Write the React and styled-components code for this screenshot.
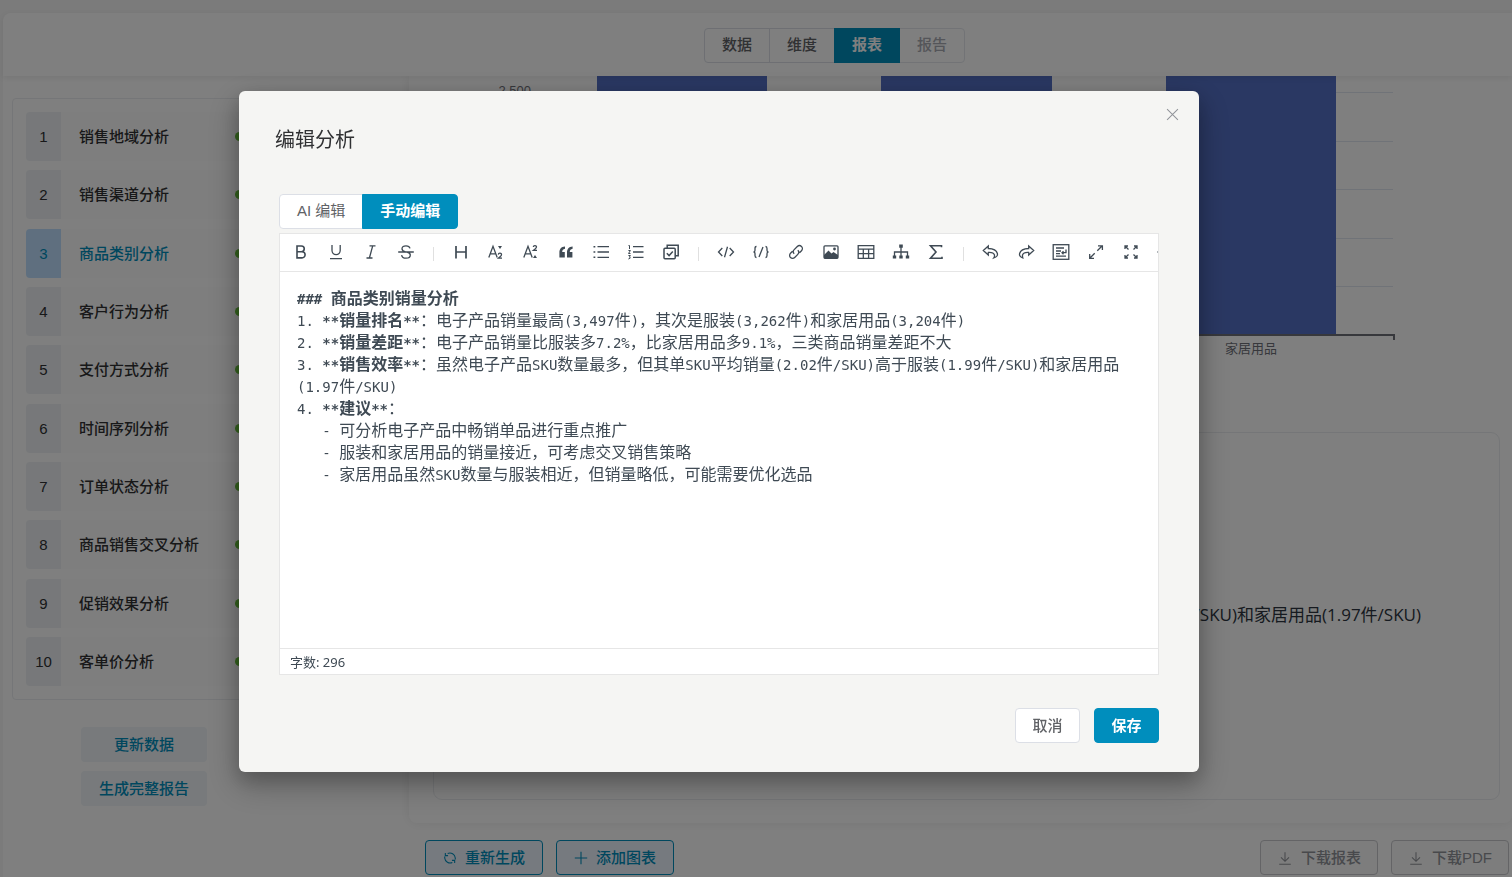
import React, { useState } from "react";
import styled, { createGlobalStyle, css } from "styled-components";

const theme = {
  primary: "#008ebd",
  text: "#303133",
  regular: "#606266",
  disabled: "#a8abb2",
  border: "#dcdfe6",
  ink: "#3f4a54",
};

const GlobalStyle = createGlobalStyle`
  * {
    box-sizing: border-box;
  }

  body {
    margin: 0;
    height: 100vh;
    overflow: hidden;
    background: #f6f6f6;
    color: ${theme.text};
    font-family: "Liberation Sans", "Noto Sans CJK SC", sans-serif;
    font-size: 15px;
  }

  button {
    font-family: inherit;
    font-size: inherit;
    cursor: pointer;
  }
`;

const Page = styled.div`
  display: flex;
  flex-direction: column;
  height: 100vh;
  padding: 13px 0 0 3px;
  overflow: hidden;
`;

const Header = styled.header`
  position: relative;
  display: flex;
  flex-shrink: 0;
  justify-content: center;
  align-items: center;
  height: 63px;
  padding: 2px 0 0 154px;
  background: #fff;
  border-radius: 8px 0 0 0;
  box-shadow: 0 2px 6px rgba(0, 0, 0, 0.08);
`;

const ButtonGroup = styled.div`
  display: flex;
`;

const GroupButton = styled.button`
  height: 35px;
  min-width: 65px;
  padding: 0 17px 2px;
  margin-left: -1px;
  border: 1px solid ${theme.border};
  background: #fff;
  color: ${theme.regular};
  line-height: 20px;

  &:first-child {
    margin-left: 0;
    border-radius: 4px 0 0 4px;
  }

  &:last-child {
    border-radius: 0 4px 4px 0;
  }

  &:disabled {
    color: ${theme.disabled};
    border-color: #e4e7ed;
  }

  ${({ $active }) =>
    $active &&
    css`
      position: relative;
      border-color: ${theme.primary};
      background: ${theme.primary};
      color: #fff;
      font-weight: 700;
    `}
`;

const StepButton = styled(GroupButton)`
  min-width: 66px;
  font-weight: ${({ $active }) => ($active ? 700 : 500)};
`;

const Body = styled.div`
  display: flex;
  flex-grow: 1;
  min-height: 0;
  background: #fff;
`;

const Aside = styled.aside`
  display: flex;
  flex-direction: column;
  flex-shrink: 0;
  align-items: center;
  gap: 9px;
  width: 264px;
  margin: 22px 133px 0 9px;
`;

const AnalysisList = styled.ul`
  display: flex;
  flex-direction: column;
  justify-content: space-between;
  align-self: stretch;
  min-height: 602px;
  margin: 0 0 18px;
  padding: 13px;
  list-style: none;
  border: 1px solid #ebedf0;
  border-radius: 4px;
`;

const AnalysisItem = styled.li`
  display: flex;
  align-items: center;
  height: 49px;
  background: #fcfcfc;
  border-radius: 4px;
  color: ${({ $active }) => ($active ? theme.primary : theme.text)};
  font-weight: 500;
`;

const ItemNumber = styled.span`
  display: flex;
  justify-content: center;
  align-items: center;
  width: 35px;
  height: 100%;
  margin-right: 18px;
  border-radius: 4px 0 0 4px;
  background: ${({ $active }) => ($active ? "#bfdfff" : "#eef1f5")};
  font-weight: 400;
`;

const ItemName = styled.span`
  padding-bottom: 2px;
`;

const StatusDot = styled.span`
  width: 9px;
  height: 9px;
  margin: 0 18px 0 auto;
  border-radius: 50%;
  background: #67c23a;
`;

const SoftButton = styled.button`
  width: 126px;
  height: 35px;
  padding: 0 0 2px;
  border: 0;
  border-radius: 4px;
  background: #f0f4f8;
  color: ${theme.primary};
  font-weight: 500;
`;

const Main = styled.main`
  flex-grow: 1;
  min-width: 0;
`;

const ReportCard = styled.section`
  padding: 0 12px 23px 24px;
  border-radius: 0 0 8px 8px;
  box-shadow: 0 0 12px rgba(0, 0, 0, 0.08);
`;

const ChartArea = styled.div`
  height: 356px;
  overflow: hidden;

  svg {
    display: block;
  }
`;

const AnalysisCard = styled.div`
  display: flex;
  flex-direction: column;
  justify-content: center;
  height: 368px;
  padding: 0 78px 2px 0;
  border: 1px solid #ebedf0;
  border-radius: 9px;
  color: #2c3440;
  font-family: "Open Sans", "Noto Sans CJK SC", sans-serif;
  font-size: 17px;
  line-height: 30px;
  text-align: right;

  p {
    margin: 0;
    white-space: nowrap;
  }
`;

const Actions = styled.div`
  display: flex;
  gap: 13px;
  padding: 17px 3px 0 16px;
`;

const ActionButton = styled.button`
  display: flex;
  justify-content: center;
  align-items: center;
  gap: 8px;
  width: 118px;
  height: 35px;
  padding: 0;
  border: 1px solid ${theme.primary};
  border-radius: 4px;
  background: #ecf5ff;
  color: ${theme.primary};
  font-weight: 500;
  white-space: nowrap;

  &:disabled {
    border-color: #c8c9cc;
    background: #fafafa;
    color: #909399;
  }

  &:nth-child(3) {
    margin-left: auto;
  }

  span {
    padding-bottom: 2px;
  }
`;

const Overlay = styled.div`
  position: fixed;
  inset: 0;
  display: flex;
  justify-content: center;
  align-items: flex-start;
  padding: 91px 74px 0 0;
  background: rgba(0, 0, 0, 0.5);
`;

const Dialog = styled.div`
  width: 960px;
  max-width: 90%;
  padding: 13px 40px 29px;
  background: #f5f5f3;
  border-radius: 6px;
  box-shadow: 0 12px 32px 4px rgba(0, 0, 0, 0.2),
    0 8px 20px rgba(0, 0, 0, 0.2);
`;

const DialogHeader = styled.div`
  display: flex;
  justify-content: space-between;
  align-items: flex-start;
  margin: 0 -24px 38px -4px;
`;

const Title = styled.h2`
  margin: 20px 0 0;
  font-size: 20px;
  font-weight: 400;
  line-height: 32px;
`;

const CloseButton = styled.button`
  display: flex;
  padding: 4px;
  border: 0;
  background: none;
  color: #909399;
`;

const Editor = styled.div`
  margin-top: 4px;
  border: 1px solid #e6e6e6;
  background: #fff;
  color: ${theme.ink};
`;

const Toolbar = styled.div`
  display: flex;
  align-items: center;
  height: 38px;
  padding: 0 0 2px 3px;
  border-bottom: 1px solid #e6e6e6;
  overflow: hidden;
`;

const ToolButton = styled.button`
  display: flex;
  flex-shrink: 0;
  justify-content: center;
  align-items: center;
  width: 35px;
  height: 26px;
  padding: 0;
  border: 0;
  background: none;
  color: ${theme.ink};
`;

const Divider = styled.span`
  flex-shrink: 0;
  width: 1px;
  height: 14px;
  margin: 4px 9px 0 10px;
  background: #e0e0e0;
`;

const Source = styled.div`
  min-height: 376px;
  padding: 14px 17px;
  outline: none;
  font-family: "Noto Sans CJK SC", sans-serif;
  font-size: 16px;
  line-height: 22px;
  white-space: pre-wrap;
  word-break: break-all;
`;

const Line = styled.div`
  height: auto;
`;

const Code = styled.span`
  font-family: "DejaVu Sans Mono", monospace;
  font-size: 14px;
  line-height: 1;
`;

const EditorFooter = styled.div`
  height: 26px;
  padding: 0 10px;
  border-top: 1px solid #e6e6e6;
  font-family: "Noto Sans", "Noto Sans CJK SC", sans-serif;
  font-size: 13px;
  line-height: 26px;
`;

const DialogFooter = styled.div`
  display: flex;
  justify-content: flex-end;
  gap: 14px;
  margin-top: 33px;
`;

const DialogButton = styled.button`
  width: 65px;
  height: 35px;
  padding: 0 0 2px;
  border: 1px solid ${({ $primary }) => ($primary ? theme.primary : theme.border)};
  border-radius: 4px;
  background: ${({ $primary }) => ($primary ? theme.primary : "#fff")};
  color: ${({ $primary }) => ($primary ? "#fff" : theme.regular)};
  font-weight: ${({ $primary }) => ($primary ? 700 : 500)};
`;

const Svg = styled.svg.attrs({ "aria-hidden": true, viewBox: "0 0 18 18" })`
  display: block;
  width: ${({ $size }) => $size || 18}px;
  height: ${({ $size }) => $size || 18}px;
  fill: none;
  stroke: currentColor;
  stroke-width: ${({ $weight }) => $weight || 1.3};

  .solid {
    fill: currentColor;
    stroke: none;
  }

  .thin {
    stroke-width: 1;
  }
`;

const icons = {
  加粗: <path strokeWidth="1.6" d="M5 3h4.4a2.8 2.8 0 0 1 0 5.7H5zM5 8.700h5a3.1 3.1 0 0 1 0 6.200H5z" />,
  下划线: <path d="M5 2v5.600a4 4 0 0 0 8.200 0V2M3 15.600h12" />,
  斜体: <path d="M7.500 2.800h6M4.500 15h6M10.700 2.800L7.400 15" />,
  删除线: (
    <path d="M13 5.400C12.600 3.700 11 2.800 9 2.800c-2.300 0-4 1.100-4 3 0 1.500 1 2.500 3.500 3.200M1.200 9h15.600M10 9c2.200.600 3.300 1.400 3.300 3 0 2-1.800 3.200-4.200 3.200-2.600 0-4.200-1.100-4.500-3.100" />
  ),
  标题: <path strokeWidth="1.700" d="M4 3v12.500M14 3v12.500M4 9h10" />,
  下标: (
    <>
      <path d="M1.800 14.500L6 3.300l4.200 11.200M3.300 10.800h5.400" />
      <path className="solid" d="M11 3h4l-2 3z" />
      <path d="M11.300 11.600c.2-2 3.300-1.800 3.200.1 0 1.200-1.700 2-3.200 3.500h3.700" />
    </>
  ),
  上标: (
    <>
      <path d="M1.800 14.500L6 3.300l4.200 11.200M3.300 10.800h5.400" />
      <path d="M11.300 4c.2-2 3.300-1.800 3.200.1 0 1.200-1.700 2-3.200 3.300h3.700" />
      <path className="solid" d="M11 15h4l-2-3z" />
    </>
  ),
  引用: (
    <path
      className="solid"
      d="M8 3.400C4.200 3.600 2.400 6 2.400 9.500v5h5.400V9H5.200c0-1.900 1-2.900 2.800-3.300zM15.600 3.400c-3.800.2-5.600 2.600-5.600 6.100v5h5.400V9h-2.600c0-1.900 1-2.900 2.800-3.300z"
    />
  ),
  无序列表: (
    <>
      <path d="M5.500 3.700h11.500M5.500 9h11.500M5.500 14.300h11.500" />
      <path className="solid" d="M1.500 3h1.800v1.600H1.500zM1.500 8.200h1.800v1.600H1.500zM1.500 13.500h1.800v1.600H1.500z" />
    </>
  ),
  有序列表: (
    <>
      <path d="M6 3.700h10.500M6 9h10.500M6 14.300h10.500" />
      <path className="thin" d="M1.500 2.500h1v3.500M1.400 7.500h2L1.500 10.500h2M1.400 12.500h2L2.400 14l1 1-2 1" />
    </>
  ),
  任务列表: (
    <>
      <path strokeWidth="1.500" d="M5.200 5V2.300h11v10.500h-2.700" />
      <rect strokeWidth="1.500" x="2" y="5.300" width="11.200" height="10.500" rx="1" />
      <path strokeWidth="1.500" d="M4.800 10.300l2.300 2.300 3.700-4" />
    </>
  ),
  行内代码: <path d="M5.300 5L1.500 9l3.800 4M12.700 5l3.800 4-3.800 4M10.500 3.800L7.500 14.200" />,
  块级代码: (
    <path d="M4.500 3.500C3 3.500 3 4.200 3 5.500v1.700C3 8.400 2.500 9 1.500 9 2.500 9 3 9.600 3 10.800v1.700c0 1.300 0 2 1.500 2M13.500 3.500c1.500 0 1.500.7 1.500 2v1.700c0 1.200.5 1.800 1.500 1.800-1 0-1.500.6-1.500 1.800v1.700c0 1.300 0 2-1.500 2M11 4L7 14" />
  ),
  链接: (
    <path d="M7.200 10.800a3 3 0 0 1 0-4.200l3.100-3.100a2.900 2.900 0 0 1 4.200 4.200l-2 2M10.800 7.200a3 3 0 0 1 0 4.200l-3.100 3.100a2.900 2.900 0 0 1-4.200-4.200l2-2" />
  ),
  图片: (
    <>
      <rect x="2" y="2.800" width="14" height="12.500" rx="1" />
      <path className="solid" d="M2 12l4.500-4.500 3 3 2-1.500L16 12v3.300H2z" />
      <circle className="solid" cx="12.500" cy="6" r="1.400" />
    </>
  ),
  表格: <path d="M1.200 2.700h15.600v12.600H1.200zM1.200 6.200h15.600M1.200 10.700h15.600M6.300 6.200v9.100M11.600 6.200v9.100" />,
  流程图: (
    <>
      <path d="M9 4v9M2.500 13V9h13v4" />
      <path className="solid" d="M7.200 1.600h3.600v3.200H7.200zM.8 12.500h3.400v3H.8zM7.300 12.500h3.400v3H7.300zM13.800 12.500h3.400v3h-3.400z" />
    </>
  ),
  公式: <path strokeWidth="1.600" d="M14.500 4.300V2.800h-11L9 9l-5.500 6.200h11.500v-1.500" />,
  后退: <path d="M6.300 3L1.300 7.500 6.300 12V9.500c3.200-.2 5.600.8 6.200 2.500.2 1 0 1.800-.8 3 3-1 4.300-2.300 3.700-4.500C14.600 7.400 11.500 5.600 6.300 5.500z" />,
  前进: <path d="M11.700 3l5 4.500-5 4.500V9.500c-3.200-.2-5.600.8-6.200 2.500-.2 1 0 1.800.3 3-2.500-1-3.800-2.300-3.200-4.500C3.400 7.400 6.500 5.600 11.700 5.500z" />,
  美化: (
    <>
      <rect x="1.200" y="1.700" width="15.600" height="14.600" />
      <path d="M4 5h8M4 8h5M4 10.600h4M4 13.200h10M14 6.500v3.200h-4M11.500 8.200L10 9.700l1.500 1.500" />
    </>
  ),
  浏览器全屏: <path d="M10.300 7.700L15 3M11 2.800h4.400v4.300M7.700 10.300L3 15M2.700 11v4.300H7" />,
  全屏: (
    <path d="M6.500 6.500L3.500 3.500M3 6V3h3M11.500 6.500l3-3M12 3h3v3M6.500 11.500l-3 3M3 12v3h3M11.500 11.500l3 3M15 12v3h-3" />
  ),
  预览: (
    <>
      <path d="M1 9c4-6 12-6 16 0-4 6-12 6-16 0z" />
      <circle cx="9" cy="9" r="2.500" />
    </>
  ),
};

const toolGroups = [
  ["加粗", "下划线", "斜体", "删除线"],
  ["标题", "下标", "上标", "引用", "无序列表", "有序列表", "任务列表"],
  ["行内代码", "块级代码", "链接", "图片", "表格", "流程图", "公式"],
  ["后退", "前进", "美化", "浏览器全屏", "全屏", "预览"],
];

const analyses = [
  "销售地域分析",
  "销售渠道分析",
  "商品类别分析",
  "客户行为分析",
  "支付方式分析",
  "时间序列分析",
  "订单状态分析",
  "商品销售交叉分析",
  "促销效果分析",
  "客单价分析",
];

const source = [
  "### 商品类别销量分析",
  "1. **销量排名**：电子产品销量最高(3,497件)，其次是服装(3,262件)和家居用品(3,204件)",
  "2. **销量差距**：电子产品销量比服装多7.2%，比家居用品多9.1%，三类商品销量差距不大",
  "3. **销售效率**：虽然电子产品SKU数量最多，但其单SKU平均销量(2.02件/SKU)高于服装(1.99件/SKU)和家居用品(1.97件/SKU)",
  "4. **建议**：",
  "   - 可分析电子产品中畅销单品进行重点推广",
  "   - 服装和家居用品的销量接近，可考虑交叉销售策略",
  "   - 家居用品虽然SKU数量与服装相近，但销量略低，可能需要优化选品",
];

// latin runs use the monospace face, everything else the CJK one
const renderRuns = (text) =>
  text
    .split(/([\x20-\x7e]+)/)
    .filter(Boolean)
    .map((run, key) => (/^[\x20-\x7e]/.test(run) ? <Code key={key}>{run}</Code> : run));

const renderLine = (line) => {
  if (line.startsWith("#")) return <b>{renderRuns(line)}</b>;
  return line
    .split(/(\*\*.+?\*\*)/)
    .map((part, key) =>
      part.startsWith("**") ? (
        <b key={key}>{renderRuns(part)}</b>
      ) : (
        <React.Fragment key={key}>{renderRuns(part)}</React.Fragment>
      )
    );
};

const Chart = () => (
  <svg width="1090" height="300" role="img" aria-label="商品类别销量">
    <g stroke="#e0e6f1">
      {[16, 65, 113, 162, 210].map((y) => (
        <path key={y} d={`M107 ${y}.5H960`} />
      ))}
    </g>
    <g fill="#5470c6">
      <rect x="164" y="0" width="170" height="259" />
      <rect x="448" y="0" width="171" height="259" />
      <rect x="733" y="0" width="170" height="259" />
    </g>
    <path d="M107 259H961V264" fill="none" stroke="#6e7079" strokeWidth="2" />
    <g fill="#6e7079" fontSize="13">
      <text x="98" y="19" textAnchor="end">2,500</text>
      <text x="818" y="277" textAnchor="middle">家居用品</text>
    </g>
  </svg>
);

const DownloadIcon = () => (
  <Svg $size={16} $weight={1.2}>
    <path d="M9 2.500v10M4.500 8.200L9 12.700l4.500-4.500M2.500 16h13" />
  </Svg>
);

const EditDialog = ({ onClose }) => {
  const [mode, setMode] = useState("manual");

  return (
    <Overlay>
      <Dialog role="dialog" aria-modal="true" aria-labelledby="dialog-title">
        <DialogHeader>
          <Title id="dialog-title">编辑分析</Title>
          <CloseButton aria-label="关闭" onClick={onClose}>
            <Svg $size={13} $weight={1.4}>
              <path d="M1.500 1.500l15 15M16.500 1.500l-15 15" />
            </Svg>
          </CloseButton>
        </DialogHeader>
        <ButtonGroup>
          <GroupButton $active={mode === "ai"} onClick={() => setMode("ai")}>
            AI 编辑
          </GroupButton>
          <GroupButton $active={mode === "manual"} onClick={() => setMode("manual")}>
            手动编辑
          </GroupButton>
        </ButtonGroup>
        <Editor>
          <Toolbar role="toolbar">
            {toolGroups.map((group, index) => (
              <React.Fragment key={index}>
                {index > 0 && <Divider />}
                {group.map((name) => (
                  <ToolButton key={name} aria-label={name}>
                    <Svg>{icons[name]}</Svg>
                  </ToolButton>
                ))}
              </React.Fragment>
            ))}
          </Toolbar>
          <Source
            role="textbox"
            aria-multiline="true"
            aria-label="分析内容"
            contentEditable
            suppressContentEditableWarning
            spellCheck={false}
          >
            {source.map((line) => (
              <Line key={line}>{renderLine(line)}</Line>
            ))}
          </Source>
          <EditorFooter>字数: 296</EditorFooter>
        </Editor>
        <DialogFooter>
          <DialogButton onClick={onClose}>取消</DialogButton>
          <DialogButton $primary onClick={onClose}>
            保存
          </DialogButton>
        </DialogFooter>
      </Dialog>
    </Overlay>
  );
};

const App = () => {
  const [open, setOpen] = useState(true);

  return (
    <>
      <GlobalStyle />
      <Page>
        <Header>
          <ButtonGroup>
            <StepButton>数据</StepButton>
            <StepButton>维度</StepButton>
            <StepButton $active>报表</StepButton>
            <StepButton disabled>报告</StepButton>
          </ButtonGroup>
        </Header>
        <Body>
          <Aside>
            <AnalysisList>
              {analyses.map((name, index) => (
                <AnalysisItem key={name} $active={index === 2}>
                  <ItemNumber $active={index === 2}>{index + 1}</ItemNumber>
                  <ItemName>{name}</ItemName>
                  <StatusDot />
                </AnalysisItem>
              ))}
            </AnalysisList>
            <SoftButton>更新数据</SoftButton>
            <SoftButton>生成完整报告</SoftButton>
          </Aside>
          <Main>
            <ReportCard>
              <ChartArea>
                <Chart />
              </ChartArea>
              <AnalysisCard>
                <p>(1.99件/SKU)和家居用品(1.97件/SKU)</p>
              </AnalysisCard>
            </ReportCard>
            <Actions>
              <ActionButton onClick={() => setOpen(true)}>
                <Svg $size={14} $weight={1.4}>
                  <path d="M6 3.200A7 7 0 0 1 15.800 9v2M12 14.800A7 7 0 0 1 2.200 9V7M3 2.500v3.500h3.500M15 15.500V12h-3.500" />
                </Svg>
                <span>重新生成</span>
              </ActionButton>
              <ActionButton>
                <Svg $size={14} $weight={1.4}>
                  <path d="M9 1v16M1 9h16" />
                </Svg>
                <span>添加图表</span>
              </ActionButton>
              <ActionButton disabled>
                <DownloadIcon />
                <span>下载报表</span>
              </ActionButton>
              <ActionButton disabled>
                <DownloadIcon />
                <span>下载PDF</span>
              </ActionButton>
            </Actions>
          </Main>
        </Body>
      </Page>
      {open && <EditDialog onClose={() => setOpen(false)} />}
    </>
  );
};

export default App;
